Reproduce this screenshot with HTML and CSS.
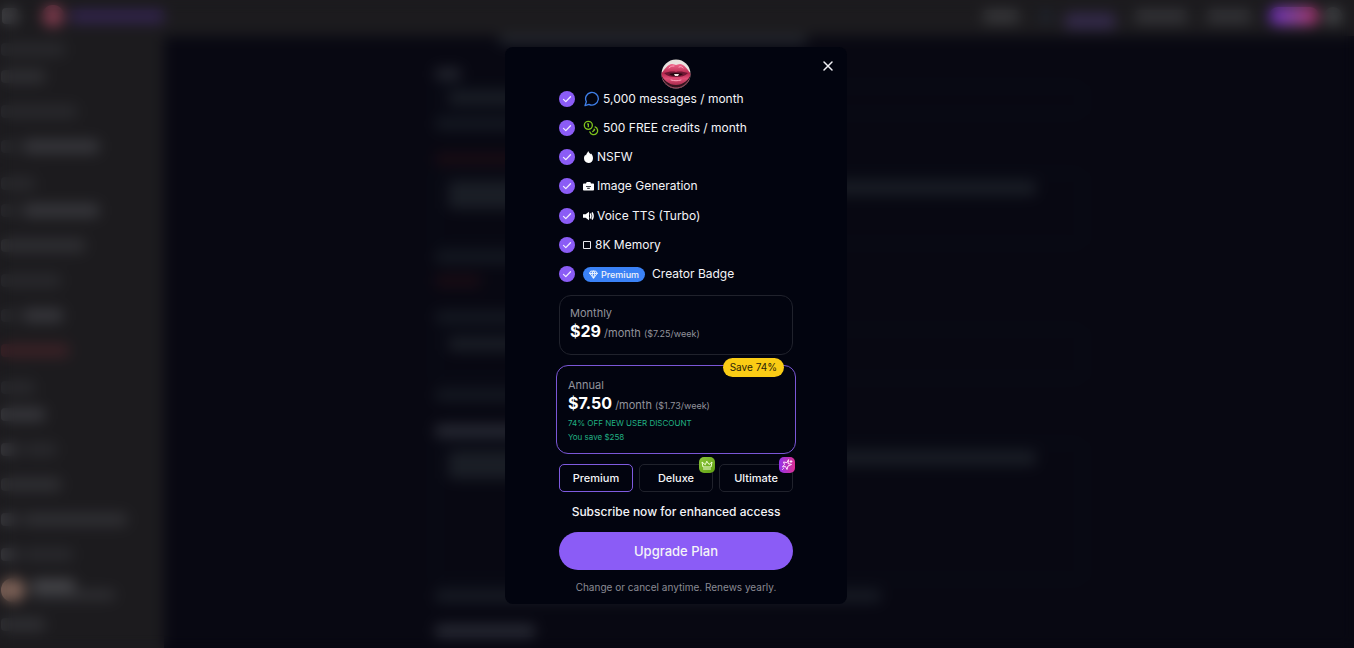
FILE: index.html
```html
<!DOCTYPE html>
<html lang="en">
<head>
<meta charset="utf-8">
<meta name="viewport" content="width=device-width, initial-scale=1">
<title>Upgrade Plan</title>
<link rel="stylesheet" href="styles.css">
</head>
<body>
<div class="page" aria-hidden="true">
  <header class="topbar">
    <i class="blob burger"></i><i class="blob brand-mark"></i><i class="blob brand-name"></i>
    <div class="topnav">
      <i class="blob nav-a"></i><i class="blob nav-dot"></i><i class="blob nav-active"></i><i class="blob nav-b"></i><i class="blob nav-c"></i><i class="blob nav-cta"></i><i class="blob nav-user"></i>
    </div>
  </header>
  <div class="shell">
    <aside class="sidebar">
      <div class="group">
        <div class="head"><i class="blob w64 faint"></i></div>
        <div class="item"><i class="blob w44"></i></div>
        <div class="item"><i class="blob w76 faint"></i></div>
        <div class="item"><i class="blob dot faint"></i><i class="blob w76 strong"></i></div>
      </div>
      <div class="group">
        <div class="head"><i class="blob w34 faint"></i></div>
        <div class="item"><i class="blob dot faint"></i><i class="blob w76 strong"></i></div>
        <div class="item"><i class="blob w84"></i></div>
        <div class="item"><i class="blob w60 faint"></i></div>
        <div class="item"><i class="blob dot faint"></i><i class="blob w40 strong"></i></div>
        <div class="item"><i class="blob w68 red"></i></div>
      </div>
      <div class="group">
        <div class="head"><i class="blob w34 faint"></i></div>
        <div class="item"><i class="blob w44 strong"></i></div>
        <div class="item"><i class="blob dot strong"></i><i class="blob w34 faint"></i></div>
        <div class="item"><i class="blob w60"></i></div>
        <div class="item"><i class="blob dot strong"></i><i class="blob w104"></i></div>
        <div class="item"><i class="blob dot strong"></i><i class="blob w50 faint"></i></div>
        <div class="item"><i class="blob face"></i><div class="who"><i class="blob w44 bright"></i><i class="blob w84"></i></div></div>
        <div class="item"><i class="blob w44"></i></div>
      </div>
    </aside>
    <main class="form">
      <i class="line intro"></i>
      <i class="line tag"></i>
      <div class="field short"><i class="line part"></i></div>
      <i class="line half"></i>
      <i class="line half warn"></i>
      <div class="field tall"><i class="line most"></i><i class="line part"></i></div>
      <i class="line half"></i>
      <i class="line mini warn"></i>
      <i class="line half caption"></i>
      <div class="field mid"><i class="line part"></i></div>
      <i class="line half"></i>
      <i class="line half caption lit"></i>
      <div class="field big"><i class="line most"></i><i class="line part"></i></div>
      <i class="line wide"></i>
      <i class="line label lit"></i>
    </main>
  </div>
</div>

<div class="overlay">
  <section class="modal" role="dialog" aria-modal="true" aria-label="Upgrade Plan">
    <button class="close" type="button" aria-label="Close">
      <svg width="12" height="12" viewBox="0 0 12 12" fill="none" stroke="#f1f1f5" stroke-width="1.5" stroke-linecap="round"><path d="M2 2l8 8M10 2l-8 8"/></svg>
    </button>
    <svg class="logo" viewBox="0 0 30 30" aria-hidden="true">
      <defs>
        <clipPath id="disc"><circle cx="15" cy="15" r="14.500"/></clipPath>
        <linearGradient id="lip" x1="0" y1="0" x2="0" y2="1"><stop offset="0" stop-color="#f0688c"/><stop offset="0.450" stop-color="#b8284f"/><stop offset="0.700" stop-color="#e04f78"/><stop offset="1" stop-color="#a82b4c"/></linearGradient>
      </defs>
      <g clip-path="url(#disc)">
        <rect width="30" height="30" fill="#e9e4df"/>
        <path d="M0 13V30H30V13L15 20z" fill="#35141f"/>
        <path d="M0 15C3 11 7 5 11 5c2 0 3 1 4 1s2-1 4-1c4 0 8 6 11 10-2 6-8 11-15 11S2 21 0 15z" fill="url(#lip)"/>
        <path d="M3 14c4-1 8-2 12-1 4-1 8 0 12 1-3 3-7 4-12 4s-9-1-12-4z" fill="#6d1733"/>
        <path d="M8 15c3-1 5-1 7-1s4 0 7 1c-3 2-5 2-7 2s-4 0-7-2z" fill="#260811"/>
        <path d="M13 15h5l-1 2h-3z" fill="#f3e9e6"/>
        <path d="M8 9c2-2 3-2 5-2M18 8c2-1 3 0 4 1M10 21c3 1 7 1 10 0" fill="none" stroke="#ffa3bb" stroke-width="1" stroke-linecap="round"/>
        <path d="M2 21c3 5 8 8 13 8s10-3 13-8" fill="none" stroke="#a65368" stroke-width="1"/>
      </g>
    </svg>

    <ul class="perks">
      <li><span class="tick"><svg viewBox="0 0 16 16"><path d="M4.500 8.400l2.300 2.200 4.700-4.900"/></svg></span>
        <svg class="ico16" viewBox="0 0 24 24" fill="none" stroke="#3f7fe8" stroke-width="2" stroke-linecap="round" stroke-linejoin="round"><path d="M3 22l2-6A9.500 9.500 0 1 1 9 20z"/></svg>
        <span class="first">5,000 messages / month</span></li>
      <li><span class="tick"><svg viewBox="0 0 16 16"><path d="M4.500 8.400l2.300 2.200 4.700-4.900"/></svg></span>
        <svg class="ico16" viewBox="0 0 24 24" fill="none" stroke="#7fc31c" stroke-width="2" stroke-linecap="round" stroke-linejoin="round"><circle cx="8" cy="8" r="6"/><path d="M18.090 10.370A6 6 0 1 1 10.340 18M7 6h1v4M16.710 13.880l.7.710-2.820 2.820"/></svg>
        <span class="first">500 FREE credits / month</span></li>
      <li><span class="tick"><svg viewBox="0 0 16 16"><path d="M4.500 8.400l2.300 2.200 4.700-4.900"/></svg></span>
        <span class="perk"><svg class="glyph" viewBox="0 0 11 12" fill="#fff"><path d="M5.200 0c.5 1.700 1.600 2 2.400 3.300.3-.4.300-.7.300-1C9.500 3.800 10 5.700 10 7.200 10 10 8.200 12 5.500 12S1 10 1 7.300c0-1.600.6-2.700 1.300-3.600.2.500.4.700.7.900C3.200 2.600 4.600 1.700 5.200 0z"/></svg>NSFW</span></li>
      <li><span class="tick"><svg viewBox="0 0 16 16"><path d="M4.500 8.400l2.300 2.200 4.700-4.900"/></svg></span>
        <span class="perk"><svg class="glyph" viewBox="0 0 11 12" fill="#fff"><path fill-rule="evenodd" d="M3 3.500L3.700 2h3.600L8 3.500h2.200c.5 0 .8.300.8.800v5.400c0 .5-.3.800-.8.800H.8c-.5 0-.8-.3-.8-.8V4.300c0-.5.300-.8.800-.8zM3 6.200v.8h5v-.8zM4.200 7.800v1h2.600v-1z"/></svg>Image Generation</span></li>
      <li><span class="tick"><svg viewBox="0 0 16 16"><path d="M4.500 8.400l2.300 2.200 4.700-4.900"/></svg></span>
        <span class="perk"><svg class="glyph" viewBox="0 0 11 12" fill="#fff"><path d="M0 4.200h2.600L6 1.800v8.400L2.600 7.800H0z"/><path d="M7.200 3.500q1.300 2.500 0 5M9 2.500q2.200 3.500 0 7" fill="none" stroke="#fff" stroke-width="1.500"/></svg>Voice TTS (Turbo)</span></li>
      <li><span class="tick"><svg viewBox="0 0 16 16"><path d="M4.500 8.400l2.300 2.200 4.700-4.900"/></svg></span>
        <span class="perk"><svg class="glyph box" viewBox="0 0 9 12" fill="none" stroke="#e8e8ee"><path d="M.5 2.500h7v7h-7z"/></svg>8K Memory</span></li>
      <li><span class="tick"><svg viewBox="0 0 16 16"><path d="M4.500 8.400l2.300 2.200 4.700-4.900"/></svg></span>
        <span class="badge"><svg viewBox="0 0 24 24" fill="none" stroke="#fff" stroke-width="2.400" stroke-linecap="round" stroke-linejoin="round"><path d="M6 3h12l4 6-10 13L2 9zM11 3L8 9l4 13 4-13-3-6M2 9h20"/></svg>Premium</span>
        <span>Creator Badge</span></li>
    </ul>

    <div class="plans">
      <button class="plan" type="button" aria-pressed="false">
        <span class="name">Monthly</span>
        <span class="cost"><b>$29</b> <span class="per">/month</span> <small>($7.25/week)</small></span>
      </button>
      <button class="plan chosen" type="button" aria-pressed="true">
        <span class="save">Save 74%</span>
        <span class="name">Annual</span>
        <span class="cost"><b>$7.50</b> <span class="per">/month</span> <small>($1.73/week)</small></span>
        <span class="deal">74% OFF NEW USER DISCOUNT</span>
        <span class="deal">You save $258</span>
      </button>
    </div>

    <div class="tiers">
      <button class="tier active" type="button">Premium</button>
      <button class="tier" type="button">Deluxe
        <span class="chip lime"><svg viewBox="0 0 24 24" fill="none" stroke="#f2ffd8" stroke-width="2" stroke-linecap="round" stroke-linejoin="round"><path d="M12 5l4 6 6-5-2 10H4L2 6l6 5zM5 20h14"/></svg></span></button>
      <button class="tier" type="button">Ultimate
        <span class="chip pink"><svg viewBox="0 0 24 24" fill="none" stroke="#ffe3fb" stroke-width="2" stroke-linecap="round" stroke-linejoin="round"><path d="M15 2l-1 7 7 2-7 3-2 7-3-6-6 1 4-5-2-5 6 1zM5 19l-2 2M20 3v4M18 5h4"/></svg></span></button>
    </div>

    <p class="pitch">Subscribe now for enhanced access</p>
    <button class="upgrade" type="button">Upgrade Plan</button>
    <p class="note">Change or cancel anytime. Renews yearly.</p>
  </section>
</div>
</body>
</html>
```
FILE: styles.css
```css
* { box-sizing: border-box; }
body { margin: 0; background: #080812; color: #f4f4f8; font-family: Inter, "Liberation Sans", sans-serif; overflow: hidden; }
button { font: inherit; color: inherit; background: none; border: 0; padding: 0; cursor: pointer; }
p, ul { margin: 0; padding: 0; list-style: none; }

/* page behind the dialog */
.page { height: 100vh; overflow: hidden; display: flex; flex-direction: column; }
.topbar { flex: none; height: 36px; padding: 0 12px 4px 2px; display: flex; align-items: center; background: #1c1b1e; }
.blob { display: block; flex: none; height: 13px; border-radius: 4px; background: #303034; }
.burger { width: 16px; height: 16px; background: #414145; }
.brand-mark { width: 22px; height: 22px; border-radius: 50%; margin-left: 24px; background: #7c3a4c; }
.brand-name { width: 94px; margin-left: 6px; background: #33244f; }
.topnav { margin-left: auto; display: flex; align-items: center; }
.nav-a { width: 36px; background: #38383b; }
.nav-dot { width: 10px; margin-left: 22px; background: #1e2430; }
.nav-active { width: 50px; height: 16px; margin: 10px 0 0 14px; background: #33294a; }
.nav-b { width: 52px; margin-left: 20px; background: #343438; }
.nav-c { width: 44px; margin-left: 20px; background: #343438; }
.nav-cta { width: 50px; height: 18px; margin-left: 18px; border-radius: 9px; background: linear-gradient(90deg, #6a2cc0, #8a449c 50%, #b03465); }
.nav-user { width: 18px; height: 18px; margin-left: 5px; border-radius: 50%; background: #444649; }
.shell { flex: 1; min-height: 0; display: flex; }
.sidebar { flex: none; width: 164px; padding-top: 3px; background: #1c1b1e; }
.group { padding: 0 4px 9px 1px; }
.head { height: 20px; display: flex; align-items: center; }
.item { height: 35px; display: flex; align-items: center; gap: 6px; }
.faint { background: #29292d; }
.strong { background: #38383d; }
.bright { background: #4b4b4f; }
.red { background: #3c2126; }
.dot { width: 16px; }
.w34 { width: 34px; } .w40 { width: 40px; } .w44 { width: 44px; } .w50 { width: 50px; }
.w60 { width: 60px; } .w64 { width: 64px; } .w68 { width: 68px; } .w76 { width: 76px; }
.w84 { width: 84px; } .w104 { width: 104px; }
.face { width: 24px; height: 24px; border-radius: 50%; background: #806459; }
.who .blob { height: 10px; }
.form { width: 648px; max-width: 100%; margin: 0 auto; display: flex; flex-direction: column; }
.line { display: block; flex: none; height: 12px; margin-bottom: 12px; border-radius: 4px; background: #151922; }
.intro { width: 308px; height: 8px; margin-left: 64px; margin-bottom: 24px; background: #252931; }
.tag { width: 26px; margin-bottom: 6px; background: #23252e; }
.field { flex: none; margin-bottom: 10px; padding: 7px 12px; border: 1px solid #0e1b26; border-radius: 6px; }
.field .line { height: 14px; margin-bottom: 0; background: #1a1e26; }
.field.short { height: 28px; padding-top: 4px; margin-bottom: 4px; }
.tall { height: 71px; margin-bottom: 7px; }
.mid { height: 50px; }
.big { height: 137px; }
.part { width: 160px; }
.most { width: 588px; max-width: 100%; }
.half { width: 380px; }
.wide { width: 446px; margin-bottom: 23px; background: #181c25; }
.mini { width: 46px; }
.label { width: 100px; }
.line.warn { background: #1a0c14; }
.line.lit { background: #2a2c36; }
.line.caption { margin-top: 12px; margin-bottom: 6px; }
.half.warn { margin-top: 11px; margin-bottom: 8px; }

/* dialog */
.overlay { position: fixed; inset: 0; display: flex; justify-content: center; align-items: center; padding-right: 2px; padding-top: 2px; backdrop-filter: blur(7px); }
.modal { position: relative; width: 342px; max-width: 100%; padding: 12px 54px 9px; display: flex; flex-direction: column; border-radius: 8px; background: #02040f; }
.close { position: absolute; top: 9px; right: 9px; width: 20px; height: 20px; display: grid; place-items: center; }
.logo { width: 30px; height: 30px; align-self: center; }
.perks { height: 196px; display: flex; flex-direction: column; justify-content: space-between; font-size: 12px; line-height: 20px; white-space: nowrap; }
.perks li { display: flex; align-items: center; }
.tick { flex: none; width: 16px; height: 16px; margin-right: 8px; border-radius: 50%; background: #8b5cf6; }
.tick svg { display: block; fill: none; stroke: #f1eaff; stroke-width: 1.3; stroke-linecap: round; stroke-linejoin: round; }
.ico16 { width: 16px; height: 16px; margin-right: 4px; }
.perk { display: flex; align-items: center; gap: 3px; }
.glyph { width: 11px; height: 12px; }
.glyph.box { width: 9px; }
.badge { display: flex; align-items: center; gap: 3px; height: 15px; margin-right: 7px; padding: 0 6px; border-radius: 8px; background: #3b82f6; font-size: 9px; font-weight: 500; line-height: 15px; }
.badge svg { width: 9px; height: 9px; }
.plans { display: flex; flex-direction: column; gap: 10px; margin-top: 10px; }
.plan { position: relative; display: flex; flex-direction: column; padding: 9px 10px 10px; border: 1px solid #20222c; border-radius: 12px; text-align: left; white-space: nowrap; }
.plan .name { font-size: 11px; line-height: 16px; color: #92939c; }
.cost { font-size: 11px; line-height: 20px; color: #92939c; }
.cost b { font-size: 16px; font-weight: 700; color: #fff; }
.cost small { font-size: 9px; }
.chosen { margin: 0 -3px; padding: 11px 11px 9px; border-color: #7a56d6; }
.deal { font-size: 8px; line-height: 14px; color: #21b083; }
.save { position: absolute; top: -8px; right: 11px; padding: 0 7px; border-radius: 10px; background: #facc15; color: #2c2508; font-size: 10px; line-height: 19px; }
.tiers { display: grid; grid-template-columns: repeat(3, 1fr); gap: 6px; margin-top: 10px; }
.tier { position: relative; height: 28px; border: 1px solid #20222c; border-radius: 5px; font-size: 11px; font-weight: 500; }
.tier.active { border-color: #7f5be0; }
.chip { position: absolute; top: -8px; right: -3px; width: 16px; height: 16px; display: grid; place-items: center; border-radius: 5px; }
.chip svg { width: 12px; height: 12px; }
.lime { background: linear-gradient(135deg, #8cc63a, #5fa012); }
.pink { background: linear-gradient(90deg, #9333ea, #db2f93); }
.pitch { margin-top: 10px; font-size: 12px; font-weight: 500; line-height: 20px; text-align: center; white-space: nowrap; }
.upgrade { height: 38px; margin-top: 10px; border-radius: 19px; background: #8b5cf6; font-size: 13px; font-weight: 500; }
.note { margin-top: 9px; font-size: 10px; line-height: 16px; text-align: center; color: #8a8b94; white-space: nowrap; }
```
